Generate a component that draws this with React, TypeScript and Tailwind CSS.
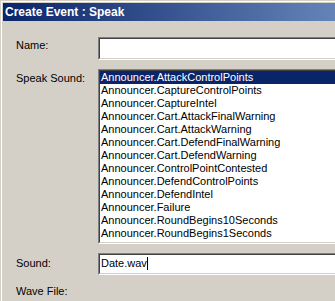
import React from "react";

const items = [
  "Announcer.AttackControlPoints",
  "Announcer.CaptureControlPoints",
  "Announcer.CaptureIntel",
  "Announcer.Cart.AttackFinalWarning",
  "Announcer.Cart.AttackWarning",
  "Announcer.Cart.DefendFinalWarning",
  "Announcer.Cart.DefendWarning",
  "Announcer.ControlPointContested",
  "Announcer.DefendControlPoints",
  "Announcer.DefendIntel",
  "Announcer.Failure",
  "Announcer.RoundBegins10Seconds",
  "Announcer.RoundBegins1Seconds",
  "Announcer.RoundBegins30Seconds",
];

function Sunken({ className, children }: { className?: string; children?: React.ReactNode }) {
  return (
    <div className={`border border-t-[#808080] border-l-[#808080] border-b-white border-r-white ${className ?? ""}`}>
      <div className="h-full border border-t-[#404040] border-l-[#404040] border-b-[#d4d0c8] border-r-[#d4d0c8] bg-white overflow-hidden">
        {children}
      </div>
    </div>
  );
}

export default function App() {
  return (
    <div className="w-[335px] h-[301px] overflow-hidden bg-[#d4d0c8] font-['Liberation_Sans',Arial,sans-serif] text-[11px] leading-[13px] text-black">
      <div className="pt-px pl-px h-full">
        <div className="h-full border-t border-l border-white pt-px pl-px">
          <div className="h-[18px] flex items-center pl-[2px] bg-[linear-gradient(90deg,#0a246a_0px,#a6caf0_575px)]">
            <span className="text-white font-bold text-[12px] leading-[14px]">Create Event : Speak</span>
          </div>
          <div className="pl-[13px] pt-[16px] flex flex-col">
            <div className="flex">
              <div className="w-[82px] pt-[2px] shrink-0">Name:</div>
              <Sunken className="w-[260px] h-[23px] shrink-0" />
            </div>
            <div className="flex mt-[9px]">
              <div className="w-[82px] pt-[3px] shrink-0">Speak Sound:</div>
              <Sunken className="w-[260px] h-[175px] shrink-0">
                <div className="flex flex-col">
                  {items.map((it, i) => (
                    <div
                      key={it}
                      className={`h-[13px] shrink-0 pl-px whitespace-nowrap ${i === 0 ? "bg-[#0a246a] text-white" : ""}`}
                    >
                      {it}
                    </div>
                  ))}
                </div>
              </Sunken>
            </div>
            <div className="flex mt-[9px]">
              <div className="w-[82px] pt-[4px] shrink-0">Sound:</div>
              <Sunken className="w-[260px] h-[22px] shrink-0">
                <div className="pl-px pt-[2px] flex items-start">
                  <span>Date.wav</span>
                  <span className="w-px h-[13px] bg-black" />
                </div>
              </Sunken>
            </div>
            <div className="mt-[10px]">Wave File:</div>
          </div>
        </div>
      </div>
    </div>
  );
}
